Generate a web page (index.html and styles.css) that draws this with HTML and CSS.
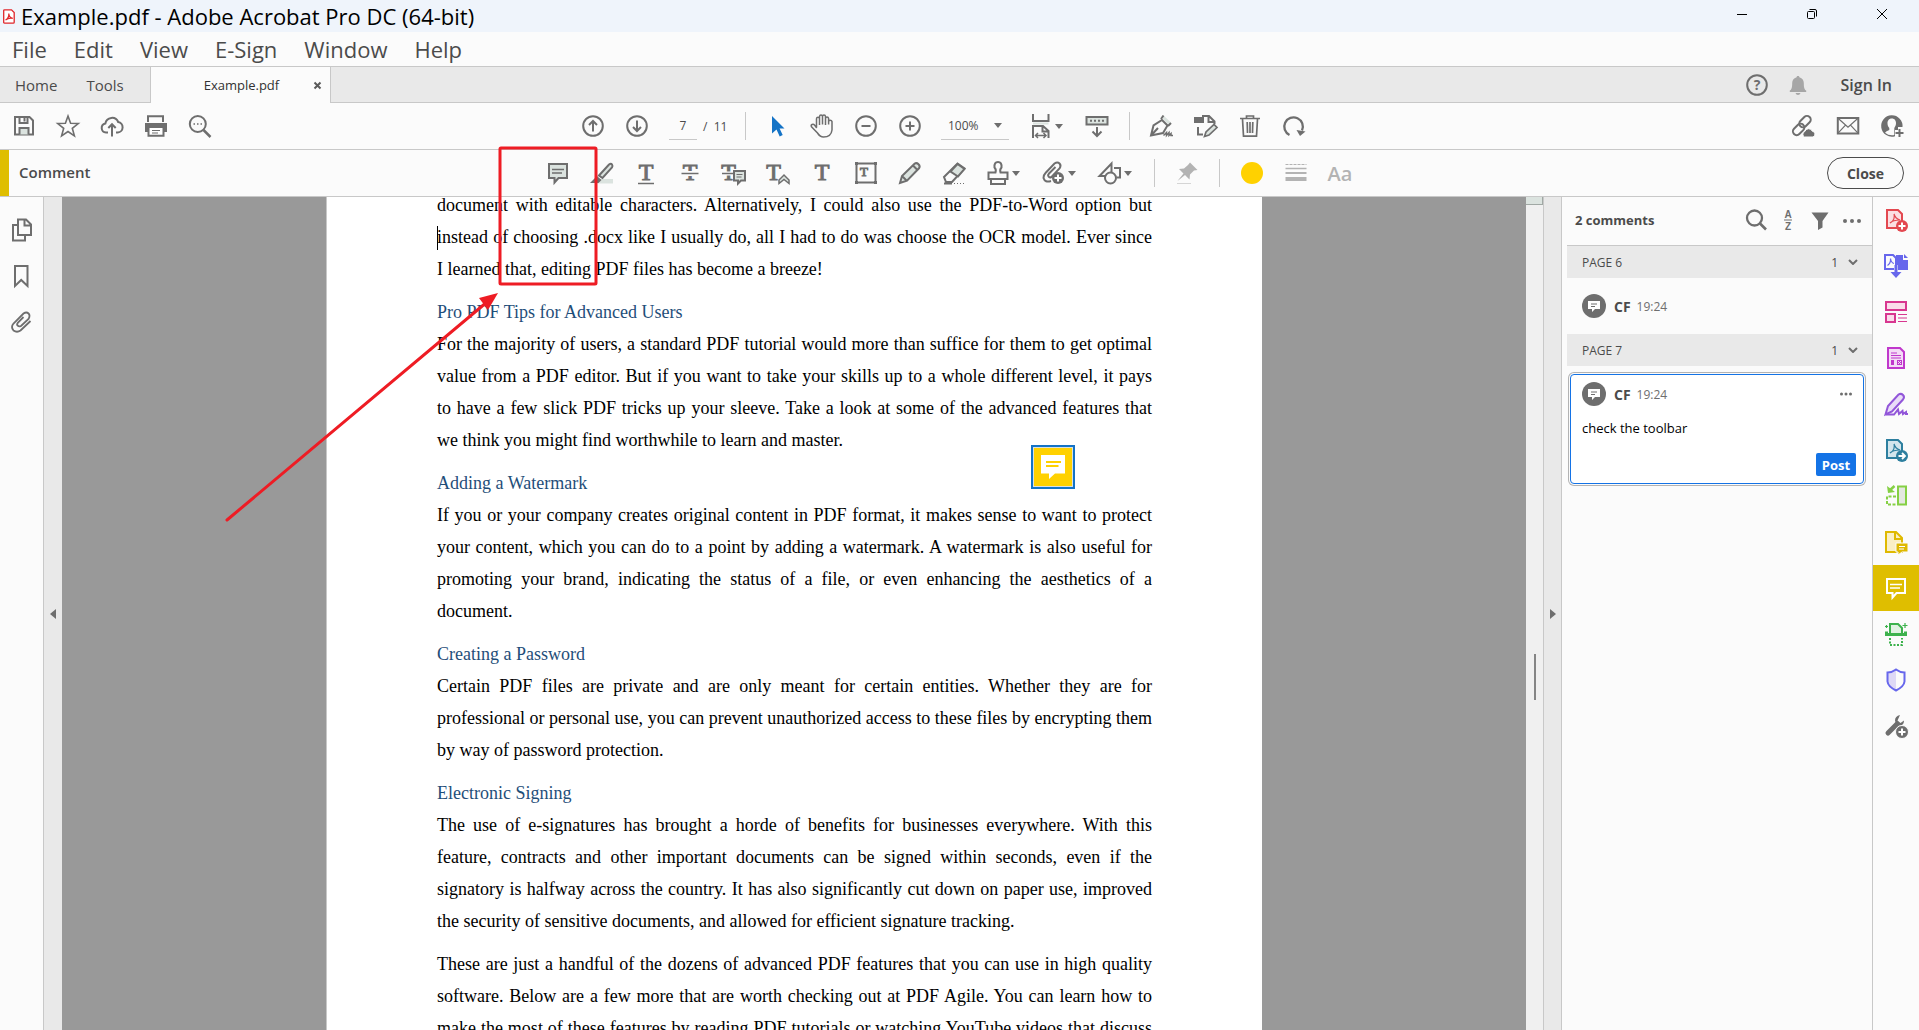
FILE: index.html
```html
<!DOCTYPE html>
<html lang="en">
<head>
<meta charset="utf-8">
<title>Example.pdf - Adobe Acrobat Pro DC (64-bit)</title>
<link rel="stylesheet" href="styles.css">
</head>
<body>
<div class="app">
  <header class="titlebar">
    <svg class="app-icon" viewBox="0 0 12 15"><path d="M1.5.8h7l2.7 2.7v9.7q0 1-1 1H1.500q-.8 0-.8-1V1.600q0-.8.8-.8z" fill="#fff" stroke="#e0262b" stroke-width="1.300"/><path d="M2.500 11c2-1 3.500-4 3.300-6.500C6 7 7.500 9 9.800 9.300 7 8.800 4.500 9.500 2.500 11z" fill="none" stroke="#e0262b" stroke-width="1.200"/></svg>
    <h1 class="app-title">Example.pdf - Adobe Acrobat Pro DC (64-bit)</h1>
    <div class="window-controls">
      <button class="win-btn" aria-label="Minimize"><svg width="12" height="12"><path d="M1 6.500h10"/></svg></button>
      <button class="win-btn" aria-label="Restore"><svg width="12" height="12"><rect x="1.500" y="3.500" width="7" height="7" rx="1"/><path d="M3.500 1.500H9q1.500 0 1.500 1.500v5.500"/></svg></button>
      <button class="win-btn" aria-label="Close window"><svg width="12" height="12"><path d="M1 1l10 10M11 1L1 11"/></svg></button>
    </div>
  </header>

  <nav class="menubar">
    <button>File</button><button>Edit</button><button>View</button><button>E-Sign</button><button>Window</button><button>Help</button>
  </nav>

  <nav class="tabbar">
    <button class="tab-home">Home</button>
    <button class="tab-tools">Tools</button>
    <div class="doc-tab"><span class="doc-name">Example.pdf</span><button class="tab-close" aria-label="Close tab"><svg width="9" height="9"><path d="M1.500 1.500l6 6M7.500 1.500l-6 6" stroke="#5a5a5a" stroke-width="2"/></svg></button></div>
    <div class="account">
      <button class="icon-btn" aria-label="Help"><svg class="ic" viewBox="0 0 24 24"><circle cx="12" cy="12" r="9.800"/><text x="12" y="17" class="glyph-q">?</text></svg></button>
      <button class="icon-btn bell" aria-label="Notifications"><svg class="ic" viewBox="0 0 24 24"><path d="M12 3c.9 0 1.300.5 1.400 1.200C16.500 5 17.800 7.500 17.800 10c0 5 .7 6.500 2.400 7.600V19H3.800v-1.400C5.500 16.500 6.200 15 6.200 10c0-2.500 1.300-5 4.400-5.800.1-.7.5-1.200 1.400-1.200zM9.500 20h5q-.6 2-2.500 2t-2.500-2z" fill="#a6a6a6" stroke="none"/></svg></button>
      <button class="sign-in">Sign In</button>
    </div>
  </nav>

  <section class="toolbar">
    <div class="group group-left">
      <button class="icon-btn" aria-label="Save"><svg class="ic" viewBox="0 0 24 24"><path d="M3 3h14.500L21 6.500V20.500H3z"/><path d="M7.500 3v6h8V3M12.500 4v3.500"/><path d="M7.500 20.500v-6.500h9v6.500" fill="#dbe3df"/></svg></button>
      <button class="icon-btn" aria-label="Star"><svg class="ic" viewBox="0 0 24 24"><path d="M12 2l2.600 7.200 7.700.3-6 4.800 2.100 7.500L12 17.500l-6.400 4.300 2.100-7.500-6-4.800 7.700-.3z" stroke-width="1.600"/></svg></button>
      <button class="icon-btn" aria-label="Upload to cloud"><svg class="ic" viewBox="0 0 24 24"><path d="M8 18.500H6a4.600 4.600 0 0 1-.6-9.100A6.700 6.700 0 0 1 18.200 8a5.300 5.300 0 0 1-.4 10.500H16M12 22.500V10.500M8.300 14L12 10.200 15.700 14"/></svg></button>
      <button class="icon-btn" aria-label="Print"><svg class="ic" viewBox="0 0 24 24"><path d="M4 8V2.200h15V8"/><path d="M1 9h22v9H1z" fill="#6e6e6e" stroke="none"/><path d="M4.500 13h15v8.800h-15z" fill="#fff"/><path d="M8 16.500h8M8 19h6" stroke-width="1.200"/></svg></button>
      <button class="icon-btn" aria-label="Find"><svg class="ic" viewBox="0 0 24 24"><circle cx="9.800" cy="10" r="8"/><path d="M15.500 16l7 7" stroke-width="2.500"/><path d="M5.500 10h1.500M9 10h1.500M12.500 10H14" stroke-width="1.500"/></svg></button>
    </div>
    <div class="group group-main">
      <button class="icon-btn" aria-label="Previous page"><svg class="ic" viewBox="0 0 24 24"><circle cx="12" cy="12" r="9.800"/><path d="M12 17.500V7.500M8 11l4-4 4 4"/></svg></button>
      <button class="icon-btn" aria-label="Next page"><svg class="ic" viewBox="0 0 24 24"><circle cx="12" cy="12" r="9.800"/><path d="M12 6.500v10M8 13l4 4 4-4"/></svg></button>
      <input class="page-input" type="text" value="7" aria-label="Page number"><span class="page-total">/&nbsp; 11</span>
      <span class="sep"></span>
      <button class="icon-btn" aria-label="Select"><svg class="ic" viewBox="0 0 24 24"><path d="M6 2v17.500l4.500-4 3.200 7 3-1.400-3.100-6.600H18.500z" fill="#1473c6" stroke="none"/></svg></button>
      <button class="icon-btn" aria-label="Hand"><svg class="ic" viewBox="0 0 24 24"><path d="M6.500 13.500V4.800q.1-1.500 1.500-1.500t1.500 1.500V11M9.500 10.500V2.500Q9.700 1 11 1t1.500 1.500v8M12.500 10.500v-8Q12.600 1 14 1t1.500 1.500V11M15.500 6.500V4.500Q15.700 3 17 3t1.600 1.500v6M18.600 7.500q.2-1.300 1.600-1.300T22 7.500V16q-.8 7-8.500 7-3.500 0-6-4L1.500 12.800q-.8-1.600.6-2.300 1.500-.6 2.600.8l2 2.700" stroke-width="1.500"/></svg></button>
      <button class="icon-btn" aria-label="Zoom out"><svg class="ic" viewBox="0 0 24 24"><circle cx="12" cy="12" r="9.800"/><path d="M7.500 12h9"/></svg></button>
      <button class="icon-btn" aria-label="Zoom in"><svg class="ic" viewBox="0 0 24 24"><circle cx="12" cy="12" r="9.800"/><path d="M7.500 12h9M12 7.500v9"/></svg></button>
      <button class="zoom-select" aria-label="Zoom level"><span>100%</span><i class="caret"></i></button>
      <button class="icon-btn has-caret" aria-label="Fit width"><svg class="ic" viewBox="0 0 24 24"><path d="M4 0v7h15.500V0"/><path d="M4 8.500h15.500v2H4z" fill="#dbe3df" stroke="none"/><path d="M4 24V12h10l5.500 5v7M13.500 12v5.500h6"/><path d="M6.500 21.500h10.500M9 19l-2.500 2.500L9 24M14.500 19l2.500 2.500-2.500 2.500" stroke-width="1.500"/></svg><i class="caret"></i></button>
      <button class="icon-btn" aria-label="Read mode"><svg class="ic" viewBox="0 0 24 24"><path d="M1.500 3h21v7.500h-21z" fill="#dbe3df"/><path d="M5 6.800h14" stroke-dasharray="2 2"/><path d="M12 13v9M7.500 17.500L12 22l4.500-4.500"/></svg></button>
      <span class="sep"></span>
      <button class="icon-btn" aria-label="Sign"><svg class="ic" viewBox="0 0 24 24"><path d="M13.500 1.500l7.500 7-3 1.500-5-5z" fill="#dbe3df" stroke="none"/><path d="M1 21.500L3.500 11.500 12 6l5.500 5.500-4.500 7.500zM1.500 21l6.500-7M11 5l2.500-3.500M18 12l3-3"/><path d="M13.500 21.500l3-3v3l2.500-3v3l2-2v2h2" stroke-width="1.500"/></svg></button>
      <button class="icon-btn" aria-label="Edit PDF"><svg class="ic" viewBox="0 0 24 24"><path d="M1 4h8v4H1z" fill="#6e6e6e"/><path d="M8 2h7l5.500 5.500V10M14.500 2v6h6M4 13v7.500h5"/><path d="M10.500 22.500l1.500-4.500L20 10.500l3 3-8 7.500z" fill="#dbe3df" stroke-width="1.700"/></svg></button>
      <button class="icon-btn" aria-label="Delete"><svg class="ic" viewBox="0 0 24 24"><path d="M2 4.500h20M8.500 4V2h7v2M4.500 5l1 17.200h13L19.500 5M9.200 8l.3 11M12 8v11M14.800 8l-.3 11" stroke-width="1.700"/></svg></button>
      <button class="icon-btn" aria-label="Rotate"><svg class="ic" viewBox="0 0 24 24"><path d="M7.500 21A9.300 9.300 0 1 1 20 16.500" stroke-width="2.300"/><path d="M14.500 16l3.500 6 5.500-4.500z" fill="#6e6e6e" stroke="none"/></svg></button>
    </div>
    <div class="group group-right">
      <button class="icon-btn" aria-label="Share link"><svg class="ic" viewBox="0 0 24 24"><g transform="rotate(-45 10 11)"><rect x="-2" y="8" width="13" height="7.500" rx="3.700"/><rect x="8" y="7" width="13" height="7.500" rx="3.700"/></g><path d="M12.500 23a3 3 0 0 1 .3-5.500 4 4 0 0 1 7.500-.3 3 3 0 0 1 .7 5.800z" fill="#6e6e6e" stroke="#fbfbfb" stroke-width="1"/></svg></button>
      <button class="icon-btn" aria-label="Email"><svg class="ic" viewBox="0 0 24 24"><path d="M1.800 4h20.500v15.500H1.800z"/><path d="M2 4.200l10 9 10-9M2 19.200l7.500-8M22 19.200l-7.500-8" stroke-width="1.200"/></svg></button>
      <button class="icon-btn" aria-label="Share with people"><svg class="ic" viewBox="0 0 24 24"><path d="M15 22.200A10.700 10.700 0 1 1 22.500 13H18v3h-3z" fill="#6e6e6e" stroke="none"/><path d="M11.800 4.500c3 0 4.200 2.200 4.200 4.800 0 2.200-1 3.500-1.700 4.700v7Q9 22 5 18.700q1-1.700 4.300-2.700V14C8.200 12.800 7.500 11.500 7.500 9.300c0-2.600 1.300-4.800 4.300-4.800z" fill="#fbfbfb" stroke="none"/><path d="M19.500 15v8M15.500 19h8"/></svg></button>
    </div>
  </section>

  <section class="toolbar comment-bar">
    <h2 class="bar-title">Comment</h2>
    <div class="group group-comment">
      <button class="icon-btn" aria-label="Add sticky note"><svg class="ic" viewBox="0 0 24 24"><path d="M3 3h18v14h-8.500L8.500 21.500V17H3z" fill="#dbe3df"/><path d="M6 8.500h12M6 12h10" stroke-width="1.300"/></svg></button>
      <button class="icon-btn" aria-label="Highlight"><svg class="ic" viewBox="0 0 24 24"><path d="M7 18h16v4.500H7z" fill="#dbe3df" stroke="none"/><path d="M9 14.500L19 3.500q2-1.500 3 0t0 3L12.500 17z" fill="#dbe3df"/><path d="M0 22l7-7 4.500 4-3 3z" fill="#6e6e6e" stroke="none"/></svg></button>
      <button class="icon-btn" aria-label="Underline"><svg class="ic" viewBox="0 0 24 24"><text x="12" y="19" class="glyph-t">T</text><path d="M4 22.500h16" stroke-width="1.500"/></svg></button>
      <button class="icon-btn" aria-label="Strikethrough"><svg class="ic" viewBox="0 0 24 24"><text x="12" y="19" class="glyph-t">T</text><path d="M3.500 12.500h17" stroke="#fbfbfb" stroke-width="5"/><path d="M3.500 12.500h17" stroke-width="1.500"/></svg></button>
      <button class="icon-btn" aria-label="Replace text"><svg class="ic" viewBox="0 0 24 24"><text x="6.500" y="19" class="glyph-t">T</text><path d="M0 12.500h11" stroke="#fbfbfb" stroke-width="4"/><path d="M0 12.500h11" stroke-width="1.500"/><path d="M12 10h11v9.500h-4l-3 3v-3h-4z" fill="#dbe3df"/><path d="M14.500 13.500h6M14.500 16h5" stroke-width="1"/></svg></button>
      <button class="icon-btn" aria-label="Insert text"><svg class="ic" viewBox="0 0 24 24"><text x="7.500" y="19" class="glyph-t">T</text><path d="M13 22.500v-3.500l5-5 5 5v3.500l-5-4z" fill="#dbe3df" stroke-width="1.500"/></svg></button>
      <button class="icon-btn" aria-label="Add text comment"><svg class="ic" viewBox="0 0 24 24"><text x="12" y="19" class="glyph-t">T</text></svg></button>
      <button class="icon-btn" aria-label="Text box"><svg class="ic" viewBox="0 0 24 24"><path d="M2.500 2.500h19v19h-19z"/><path d="M1 1h3v3H1zM20 1h3v3h-3zM1 20h3v3H1zM20 20h3v3h-3z" fill="#6e6e6e" stroke="none"/><text x="10" y="15" class="glyph-t small">T</text></svg></button>
      <button class="icon-btn" aria-label="Draw"><svg class="ic" viewBox="0 0 24 24"><path d="M2 22l2-7L16.500 2.800q2-1.500 4 .5t.5 4L9 19.700zM15 4.500l4.500 4.500M4 15l5 5" fill="#dbe3df"/></svg></button>
      <button class="icon-btn" aria-label="Erase"><svg class="ic" viewBox="0 0 24 24"><path d="M2 16L15.500 2.500l7 5L10 21H4z" fill="#fbfbfb"/><path d="M8.500 10.500L15.500 3l7 5-6.500 7.500z" fill="#dbe3df"/><path d="M2 22.500h8"/><path d="M12 22.500h10" stroke-dasharray="1 2" stroke-width="1"/></svg></button>
      <button class="icon-btn has-caret" aria-label="Stamp"><svg class="ic" viewBox="0 0 24 24"><path d="M2.500 18v-6.500h7q1-3-1-5Q8 1 12 1t3.500 5.500q-2 2-1 5h7V18zM5 18v5h14v-5"/></svg><i class="caret"></i></button>
      <button class="icon-btn has-caret" aria-label="Attach"><svg class="ic" viewBox="0 0 24 24"><path d="M9 20Q3 22 1.500 17q0-3 2-5l9-9.500q3-2 5 0t0 5l-8 8.500q-2 1-3-.500t.5-3L13.500 6"/><circle cx="16" cy="17" r="6" fill="#6e6e6e" stroke="none"/><path d="M16 13.500v7M12.500 17h7" stroke="#fff"/></svg><i class="caret"></i></button>
      <button class="icon-btn has-caret" aria-label="Shapes"><svg class="ic" viewBox="0 0 24 24"><path d="M7 15H1.500L13.500 2.500V11M16 7h6v9.500h-3"/><circle cx="12.500" cy="17" r="5.500"/></svg><i class="caret"></i></button>
      <span class="sep"></span>
      <button class="icon-btn" aria-label="Keep tool selected"><svg class="ic" viewBox="0 0 24 24"><path d="M15 1.500L22.500 9l-3.500.5-4 4-.5 5-4.500-4.500-7.500 6 6-7.500L4 8l5-.5 4-3.500z" fill="#b3b3b3" stroke="none"/><path d="M2 22.500h14" stroke="#d5d5d5" stroke-width="1"/></svg></button>
      <span class="sep"></span>
      <button class="icon-btn" aria-label="Colour"><span class="swatch"></span></button>
      <button class="icon-btn" aria-label="Line thickness"><svg class="ic" viewBox="0 0 24 24"><g stroke="#b3b3b3"><path d="M1.500 3.500h21" stroke-width="1" stroke-dasharray="3 1"/><path d="M1.500 7.500h21" stroke-width="1.500"/><path d="M1.500 12h21" stroke-width="2"/><path d="M1.500 18h21" stroke-width="4"/></g></svg></button>
      <button class="icon-btn text-props" aria-label="Text properties">Aa</button>
    </div>
    <div class="group group-right"><button class="close-btn">Close</button></div>
  </section>

  <main class="workspace">
    <nav class="left-rail">
      <button aria-label="Page thumbnails"><svg class="ic" viewBox="0 0 24 24"><path d="M8 7H3v15.500h12V18"/><path d="M8 1.500h8l5 5V17H8zM14.500 2v5.500h6"/></svg></button>
      <button aria-label="Bookmarks"><svg class="ic" viewBox="0 0 24 24"><path d="M5 2h12.500v20L11.200 16 5 22z"/></svg></button>
      <button aria-label="Attachments"><svg class="ic" viewBox="0 0 24 24"><path d="M20.500 11l-10 9.500q-3.500 2.500-7 0-3-3.500 0-7L13.500 3.500q3-2 5 0t0 5.500L11 16q-2 1-3.300-.3T8 12.500L13.500 7" stroke-width="1.800"/></svg></button>
    </nav>
    <button class="gutter gutter-left" aria-label="Collapse navigation pane"><i class="arrow-left"></i></button>

    <div class="canvas">
      <article class="page">
        <p>document with editable characters. Alternatively, I could also use the PDF-to-Word option but <span class="keep"><span class="text-cursor"></span>instead</span> of choosing .docx like I usually do, all I had to do was choose the OCR model. Ever since I&nbsp;learned that, editing PDF files has become a breeze!</p>
        <h3>Pro PDF Tips for Advanced Users</h3>
        <p>For the majority of users, a standard PDF tutorial would more than suffice for them to get optimal value from a PDF editor. But if you want to take your skills up to a whole different level, it pays to&nbsp;have a few slick PDF tricks up your sleeve. Take a look at some of the advanced features that we&nbsp;think you might find worthwhile to learn and master.</p>
        <h3>Adding a Watermark</h3>
        <p>If you or your company creates original content in PDF format, it makes sense to want to protect your content, which you can do to a point by adding a watermark. A watermark is also useful for promoting your brand, indicating the status of a file, or even enhancing the aesthetics of a document.</p>
        <h3>Creating a Password</h3>
        <p>Certain PDF files are private and are only meant for certain entities. Whether they are for professional or personal use, you can prevent unauthorized access to these files by encrypting them by way of password protection.</p>
        <h3>Electronic Signing</h3>
        <p>The use of e-signatures has brought a horde of benefits for businesses everywhere. With this feature, contracts and other important documents can be signed within seconds, even if the signatory is halfway across the country. It has also significantly cut down on paper use, improved the security of sensitive documents, and allowed for efficient signature tracking.</p>
        <p>These are just a handful of the dozens of advanced PDF features that you can use in high quality software. Below are a few more that are worth checking out at PDF Agile. You can learn how to make the most of these features by reading PDF tutorials or watching YouTube videos that discuss</p>
        <button class="sticky-note" aria-label="Sticky note"><svg width="24" height="24"><path d="M0 0h24v18.500h-10L8 24v-5.500H0z" fill="#fff"/><path d="M5 7h15M5 11h12.500" stroke="#ffd100" stroke-width="2"/></svg></button>
      </article>
    </div>

    <div class="scrollbar"><span class="scroll-up"></span><span class="scroll-thumb"></span></div>
    <button class="gutter gutter-right" aria-label="Collapse comments pane"><i class="arrow-right"></i></button>

    <aside class="comments">
      <header class="comments-head">
        <h2>2 comments</h2>
        <button aria-label="Search comments"><svg class="ic" viewBox="0 0 24 24"><circle cx="10.500" cy="10" r="7.500" stroke-width="2.300"/><path d="M16 15.500l6 6" stroke-width="2.600"/></svg></button>
        <button aria-label="Sort comments"><svg class="ic" viewBox="0 0 24 24"><text x="12" y="10" class="glyph-az">A</text><text x="12" y="22" class="glyph-az">Z</text><path d="M8 12h8" stroke-width="1"/></svg></button>
        <button aria-label="Filter comments"><svg class="ic" viewBox="0 0 24 24"><path d="M3.500 4.500h17L14.500 13v6.500L10 22v-9z" fill="#6e6e6e" stroke="none"/></svg></button>
        <button aria-label="More options"><svg class="ic" viewBox="0 0 24 24"><g fill="#6e6e6e" stroke="none"><circle cx="5" cy="13" r="2"/><circle cx="12" cy="13" r="2"/><circle cx="19" cy="13" r="2"/></g></svg></button>
      </header>
      <div class="comment-list">
        <button class="page-row"><span>PAGE 6</span><span class="count">1</span><svg width="10" height="6"><path d="M1 1l4 4 4-4"/></svg></button>
        <section class="comment">
          <div class="byline"><span class="avatar"><svg width="12" height="12"><path d="M0 1h12v8H7l-3 3V9H0z" fill="#fff"/><path d="M3 4h6M3 6.500h4" stroke="#6e6e6e"/></svg></span><b>CF</b><time>19:24</time></div>
        </section>
        <button class="page-row"><span>PAGE 7</span><span class="count">1</span><svg width="10" height="6"><path d="M1 1l4 4 4-4"/></svg></button>
        <section class="comment active">
          <div class="byline"><span class="avatar"><svg width="12" height="12"><path d="M0 1h12v8H7l-3 3V9H0z" fill="#fff"/><path d="M3 4h6M3 6.500h4" stroke="#6e6e6e"/></svg></span><b>CF</b><time>19:24</time><button class="more" aria-label="Comment options"><svg width="12" height="4"><g fill="#6e6e6e"><circle cx="1.500" cy="2" r="1.500"/><circle cx="6" cy="2" r="1.500"/><circle cx="10.500" cy="2" r="1.500"/></g></svg></button></div>
          <p>check the toolbar</p>
          <button class="post-btn">Post</button>
        </section>
      </div>
    </aside>

    <nav class="tool-rail">
      <button aria-label="Create PDF"><svg class="ic" viewBox="0 0 24 24"><g stroke="#e34850"><path d="M3 2h11l4 4v14H3z" fill="#fbdfe3"/><path d="M6 15c4-2 5-6 4-9 1 4 3 5 6 6-4 0-7 0-10 3z" stroke-width="1.200"/></g><circle cx="18" cy="18" r="6" fill="#e34850" stroke="none"/><path d="M18 14.500v7M14.500 18h7" stroke="#fff"/></svg></button>
      <button aria-label="Combine files"><svg class="ic" viewBox="0 0 24 24"><path d="M12 1h7v5h5v10H12z" fill="#6767ec" stroke="none"/><path d="M20 0l4 4h-4z" fill="#6767ec" stroke="none"/><path d="M1 1h8l3 3v11H1z" stroke="#6767ec" fill="#fbfbfb"/><path d="M3.500 11.500Q7 9 6.500 4.500 7 8.500 10 9.500" stroke="#6767ec" stroke-width="1.200"/><path d="M12 11v12M7 18l5 5 5-5z" stroke="#fbfbfb" stroke-width="4"/><path d="M12 11v8" stroke="#6767ec" stroke-width="3"/><path d="M6.500 18h11L12 24z" fill="#6767ec" stroke="none"/></svg></button>
      <button aria-label="Organize pages"><svg class="ic" viewBox="0 0 24 24"><g stroke="#d83790"><path d="M2 2h20v8H2zM2 14h9v8H2z" fill="#fadcea"/><path d="M14 14.500h9M14 18h9M14 21.500h9" stroke-width="1.200"/></g></svg></button>
      <button aria-label="Edit form"><svg class="ic" viewBox="0 0 24 24"><g stroke="#c038cc"><path d="M4 2h12l4 4v16H4z" fill="#f3dcf6"/><path d="M7 7h6M7 9.500h10M7 12h10" stroke-width="1.200"/><path d="M7 14h3v5H7zM13 14h5v5h-5z" fill="#c038cc" stroke="none"/><path d="M14 15l3 3M17 15l-3 3" stroke="#f3dcf6" stroke-width="1"/></g></svg></button>
      <button aria-label="Fill and sign"><svg class="ic" viewBox="0 0 24 24"><g stroke="#9256d9"><path d="M1.500 22.500L4 14 14.500 2.500q2.500-1.500 4.500.5t0 4.500L8 19.500z" fill="#e9ddf8"/><path d="M2 22.500h8l4-5 1 4.500 3.500-3 .5 3 3-2v2h2"/></g></svg></button>
      <button aria-label="Export PDF"><svg class="ic" viewBox="0 0 24 24"><g stroke="#2d7f9f"><path d="M3 2h11l4 4v14H3z" fill="#d3e6ed"/><path d="M6 15c4-2 5-6 4-9 1 4 3 5 6 6-4 0-7 0-10 3z" stroke-width="1.200"/></g><circle cx="18" cy="18" r="6" fill="#2d7f9f" stroke="none"/><path d="M14.500 18h6M18 15l3 3-3 3" stroke="#fff" stroke-width="1.800"/></svg></button>
      <button aria-label="Compress"><svg class="ic" viewBox="0 0 24 24"><g stroke="#85d044"><path d="M14 2.500h8v18h-8z" fill="#e4e8e1"/><path d="M12 12.500H3v8h9" stroke-dasharray="3 1.500"/><path d="M10.500 2L5 7" stroke-width="2.500"/><path d="M3 2l1 7 7-1z" fill="#85d044" stroke="none"/></g></svg></button>
      <button aria-label="Send for comments"><svg class="ic" viewBox="0 0 24 24"><g stroke="#dfb900"><path d="M2 2h10l6 6v14H2z" fill="#faefc5"/><path d="M11 2v7h7"/></g><path d="M12 13h12v9h-6l-4 3v-3h-2z" fill="#dfb900" stroke="#fbfbfb" stroke-width="1"/><path d="M15 16.500h6M15 19h5" stroke="#fff" stroke-width="1"/></svg></button>
      <button class="selected" aria-label="Comment"><svg class="ic" viewBox="0 0 24 24"><g stroke="#fff"><path d="M3 3h18v14h-8.500L8.500 21.500V17H3z"/><path d="M6 8.500h12M6 12h10" stroke-width="1.600"/></g></svg></button>
      <button aria-label="Scan and OCR"><svg class="ic" viewBox="0 0 24 24"><g stroke="#3db24d"><path d="M6 11V2h8l4 4v5" fill="#e0f2e2"/><path d="M2.500 9.500v3h19v-3" stroke-width="3"/><path d="M6 16v7h12v-7" stroke-dasharray="2 1.500"/><path d="M21 1v5M18.500 3.500h5M2.500 3v3M1 4.500h3" stroke-width="1.200"/></g></svg></button>
      <button aria-label="Protect"><svg class="ic" viewBox="0 0 24 24"><path d="M12 1.500v21Q4 18.500 3.500 13.500v-9Q8 4.500 12 1.500z" fill="#ded9f6" stroke="none"/><path d="M12 1.500Q16 4.500 20.500 4.500v9Q20 18.500 12 22.500 4 18.500 3.500 13.500v-9Q8 4.500 12 1.500z" stroke="#6767ec"/></svg></button>
      <button aria-label="More tools"><svg class="ic" viewBox="0 0 24 24"><path d="M4 19L13 10" stroke-width="5" stroke-linecap="round"/><path d="M16 1q-5 1-5 5.500 1 6 6 5 3-1 3-5L16.500 9 13.500 6.500z" fill="#6e6e6e" stroke="none"/><circle cx="18" cy="18" r="6.500" fill="#6e6e6e" stroke="#fbfbfb" stroke-width="1"/><path d="M18 14.500v7M14.500 18h7" stroke="#fff"/></svg></button>
    </nav>
  </main>

  <svg class="markup" width="600" height="530"><rect x="500" y="148" width="96" height="136" rx="1" fill="none" stroke="#ee1c24" stroke-width="3"/><path d="M227 520L487 302" stroke="#ee1c24" stroke-width="3" stroke-linecap="round"/><path d="M498 293l-19 5 9 12z" fill="#ee1c24"/></svg>
</div>
</body>
</html>
```

FILE: styles.css
```css
* { box-sizing: border-box; }

body {
  margin: 0;
  font-family: "Open Sans", "Noto Sans", sans-serif;
  font-size: 14px;
  color: #4b4b4b;
}

button {
  padding: 0;
  border: 0;
  background: none;
  font: inherit;
  color: inherit;
}

h1, h2, h3, p { margin: 0; font-weight: 400; }

.app {
  position: relative;
  display: flex;
  flex-direction: column;
  height: 100vh;
  overflow: hidden;
  background: #fbfbfb;
}

/* Icons */
.ic {
  display: block;
  overflow: visible;
  width: 24px;
  height: 24px;
  fill: none;
  stroke: #6e6e6e;
  stroke-width: 2;
}
.ic text { fill: #6e6e6e; stroke: none; text-anchor: middle; }
.ic .glyph-t { font: 24px "Liberation Serif", serif; stroke: #6e6e6e; stroke-width: 1px; }
.ic .glyph-t.small { font-size: 13px; }
.ic .glyph-q { font: 700 14px "Open Sans", sans-serif; }
.ic .glyph-az { font: 700 10px "Liberation Sans", sans-serif; }

.caret {
  border: 4px solid transparent;
  border-top: 5px solid #6e6e6e;
  border-bottom: 0;
}

/* Title bar */
.titlebar {
  display: flex;
  align-items: center;
  flex: 0 0 32px;
  padding-left: 3px;
  background: #eff4fb;
}
.app-icon { width: 12px; height: 15px; }
.app-title { margin-left: 6px; font-size: 22px; line-height: 30px; color: #000; }
.window-controls { display: flex; align-self: flex-start; margin-left: auto; padding-right: 2px; }
.win-btn { display: grid; place-items: center; width: 70px; height: 28px; }
.win-btn svg { fill: none; stroke: #000; }

/* Menu bar */
.menubar {
  display: flex;
  gap: 27px;
  flex: 0 0 34px;
  padding-left: 12px;
  font-size: 22px;
  line-height: 34px;
}

/* Tabs */
.tabbar {
  display: flex;
  flex: 0 0 37px;
  border-top: 1px solid #c8c8c8;
  background: #e9e9e9;
  box-shadow: inset 0 -1px #c8c8c8;
}
.tab-home { margin-left: 15px; font-size: 15px; }
.tab-tools { margin-left: 29px; font-size: 15px; }
.doc-tab {
  display: flex;
  align-items: center;
  width: 181px;
  margin-left: 26px;
  padding: 0 8px 0 53px;
  border: solid #c8c8c8;
  border-width: 0 1px;
  background: #fbfbfb;
  font-size: 13px;
  color: #323232;
}
.tab-close { margin-left: auto; }
.tab-close svg { display: block; }
.account { display: flex; align-items: center; margin-left: auto; padding-right: 27px; }
.account .icon-btn { width: 41px; }
.sign-in { margin-left: 22px; font-size: 16px; font-weight: 600; }

/* Toolbars */
.toolbar {
  display: grid;
  grid-template-columns: 1fr auto 1fr;
  flex: 0 0 47px;
  border-bottom: 1px solid #c8c8c8;
}
.group { display: flex; align-items: center; }
.group-left { padding-left: 2px; }
.group-main { padding-right: 32px; }
.group-comment { padding-right: 21px; }
.group-right { justify-content: flex-end; padding-right: 5px; }
.icon-btn {
  display: flex;
  align-items: center;
  justify-content: center;
  width: 44px;
  height: 36px;
}
.icon-btn.has-caret { justify-content: flex-start; gap: 2px; width: 56px; padding-left: 10px; }
.sep { width: 1px; height: 28px; margin: 0 10px; background: #c8c8c8; }
.page-input {
  width: 28px;
  height: 28px;
  margin: 0 6px 0 10px;
  padding: 0;
  border: 0;
  border-bottom: 1px solid #c8c8c8;
  background: none;
  font: 12px "Open Sans", sans-serif;
  color: #4b4b4b;
  text-align: center;
}
.page-total { width: 32px; font-size: 12px; }
.zoom-select {
  display: flex;
  align-items: center;
  justify-content: space-between;
  width: 68px;
  height: 28px;
  margin: 0 10px 0 9px;
  padding: 0 7px;
  border-bottom: 1px solid #c8c8c8;
  font-size: 12px;
}
.comment-bar { box-shadow: inset 9px 0 #dfbe00; }
.bar-title { padding-left: 19px; font-size: 15px; font-weight: 600; line-height: 45px; }
.swatch { width: 22px; height: 22px; border-radius: 50%; background: #ffd100; }
.text-props { font-size: 20px; font-weight: 600; color: #b3b3b3; }
.close-btn {
  width: 77px;
  height: 32px;
  margin-right: 10px;
  border: 1px solid #4b4b4b;
  border-radius: 16px;
  font-size: 14px;
  font-weight: 700;
}

/* Workspace */
.workspace { display: flex; flex: 1; min-height: 0; }
.left-rail { flex: 0 0 44px; padding-top: 10px; border-right: 1px solid #c8c8c8; }
.left-rail button { display: grid; place-items: center; width: 43px; height: 46px; }
.gutter { display: grid; place-items: center; flex: 0 0 18px; background: #e9e9e9; }
.gutter-right { border: solid #c8c8c8; border-width: 0 1px; flex-basis: 19px; }
.arrow-left { border: 5px solid transparent; border-right: 6px solid #6e6e6e; border-left: 0; }
.arrow-right { border: 5px solid transparent; border-left: 6px solid #6e6e6e; border-right: 0; }

.canvas {
  display: flex;
  justify-content: center;
  flex: 1;
  min-width: 0;
  overflow: hidden;
  background: #999;
}
.page {
  position: relative;
  align-self: flex-start;
  width: 936px;
  margin-top: -8px;
  padding: 0 110px;
  border-left: 1px solid #c8c8c8;
  background: #fff;
  font: 18px/32px "Liberation Serif", serif;
  color: #000;
}
.page p { margin-bottom: 11px; text-align: justify; }
.page p:last-of-type { text-align-last: justify; }
.page h3 { font: inherit; color: #1f4e79; }
.keep { white-space: nowrap; }
.text-cursor { display: inline-block; width: 1px; height: 24px; margin-right: -1px; vertical-align: -7px; background: #000; }
.sticky-note {
  position: absolute;
  top: 256px;
  left: 704px;
  display: grid;
  place-items: center;
  width: 44px;
  height: 44px;
  border: 2px solid #1473c6;
  background: #ffd100;
  box-shadow: inset 0 0 0 1px #d5e0e4;
}

.scrollbar { display: flex; flex-direction: column; align-items: center; flex: 0 0 17px; background: #f0f0f0; }
.scroll-up { width: 17px; height: 8px; border: solid #a0a8a4; border-width: 0 1px 1px 0; background: #dbe3df; }
.scroll-thumb { width: 2px; height: 46px; margin-top: 449px; background: #858585; }

/* Comments pane */
.comments { flex: 0 0 310px; }
.comments-head { display: flex; align-items: center; height: 48px; padding: 0 4px 2px 13px; }
.comments-head h2 { flex: 1; font-size: 13px; font-weight: 700; }
.comments-head button { display: grid; place-items: center; width: 32px; height: 32px; }
.comment-list { margin-left: 5px; border-top: 1px solid #c8c8c8; }
.page-row {
  display: flex;
  align-items: center;
  width: 100%;
  height: 32px;
  padding: 0 14px 0 15px;
  background: #e9e9e9;
  font-size: 12px;
}
.page-row svg { margin-left: 10px; fill: none; stroke: #6e6e6e; stroke-width: 2; }
.count { margin-left: auto; }
.comment { padding: 16px 15px; }
.byline { display: flex; align-items: center; height: 24px; }
.byline b { margin-left: 8px; font-size: 14px; }
.byline time { margin-left: 6px; font-size: 12px; color: #6e6e6e; }
.avatar { display: grid; place-items: center; width: 24px; height: 24px; border-radius: 50%; background: #6e6e6e; }
.more { margin-left: auto; margin-right: 4px; }
.more svg { display: block; }
.comment.active {
  display: flex;
  flex-direction: column;
  height: 110px;
  margin: 8px 8px 0 3px;
  padding: 7px 7px 7px 11px;
  border: 1px solid #1473e6;
  border-radius: 4px;
  background: #fff;
  box-shadow: 0 0 0 1px #fbfbfb, 0 0 0 2px #b3b3b3;
}
.comment.active p { margin-top: 12px; font-size: 13px; line-height: 20px; color: #000; }
.post-btn {
  align-self: flex-end;
  width: 40px;
  height: 23px;
  margin-top: auto;
  border-radius: 2px;
  background: #1473e6;
  font-size: 13px;
  font-weight: 700;
  color: #fff;
}

/* Tool rail */
.tool-rail { flex: 0 0 47px; border-left: 1px solid #c8c8c8; }
.tool-rail button { display: grid; place-items: center; width: 46px; height: 46px; }
.tool-rail .selected { background: #dfbe00; }

/* Red callout drawn over the window */
.markup { position: absolute; top: 0; left: 0; pointer-events: none; }
```
